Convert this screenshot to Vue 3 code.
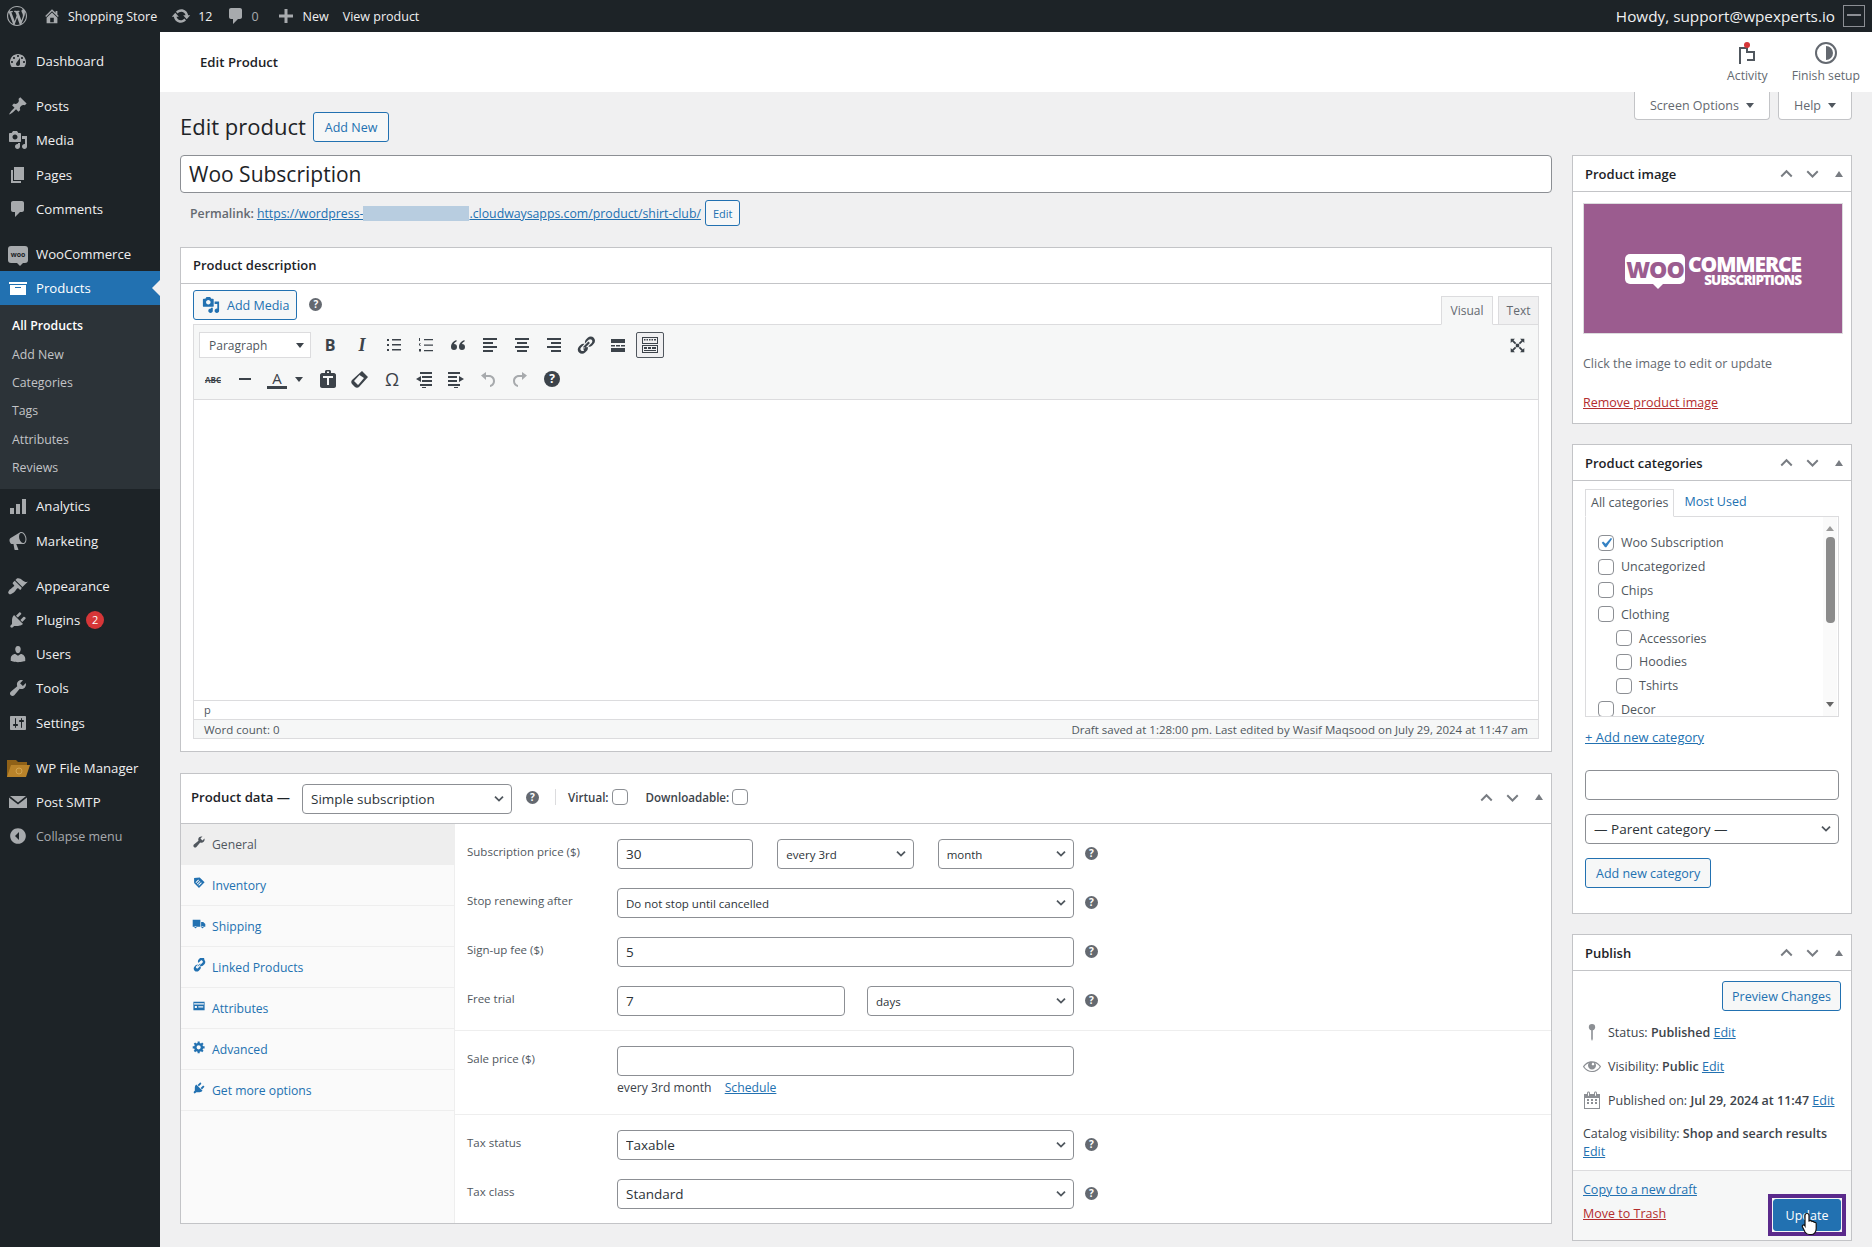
<template>
  <div class="page">
    <header class="adminbar">
      <div class="bar-item wp"><svg class="bar-icon" viewBox="0 0 20 20"><path :d="icons.wordpress" /></svg></div>
      <div class="bar-item home"><svg class="bar-icon small" viewBox="0 0 20 20"><path :d="icons.home" /></svg>Shopping Store</div>
      <div class="bar-item"><svg class="bar-icon" viewBox="0 0 20 20"><path :d="icons.update" /></svg>12</div>
      <div class="bar-item muted"><svg class="bar-icon" viewBox="0 0 20 20"><path :d="icons.comment" /></svg>0</div>
      <div class="bar-item"><svg class="bar-icon" viewBox="0 0 20 20"><path :d="icons.plus" /></svg>New</div>
      <div class="bar-item">View product</div>
      <div class="howdy">Howdy, support@wpexperts.io<span class="avatar"><i></i></span></div>
    </header>

    <div class="layout">
      <aside class="sidebar">
        <template v-for="item in menu" :key="item.label">
          <div class="menu-item" :class="{ current: item.current, sep: item.sep, collapse: item.collapse }">
            <span v-if="item.woo" class="woo-badge">woo</span>
            <svg v-else-if="item.folder" class="menu-icon folder" viewBox="0 0 23 18"><path fill="#8f6118" d="M0 1h9l2 2h9v4H0zM0 6h4v12H0z" /><path fill="#b9832a" d="M4 6h19l-4 12H0z" /><circle cx="12" cy="12" r="3" fill="none" stroke="#d3a552" /></svg>
            <svg v-else class="menu-icon" viewBox="0 0 20 20"><path :d="icons[item.icon]" fill-rule="evenodd" /></svg>
            <span>{{ item.label }}</span>
            <span v-if="item.badge" class="badge">{{ item.badge }}</span>
          </div>
          <ul v-if="item.current" class="submenu">
            <li v-for="(sub, i) in submenu" :key="sub" :class="{ active: i === 0 }">{{ sub }}</li>
          </ul>
        </template>
      </aside>

      <div class="main">
        <div class="topbar">
          <h2 class="topbar-title">Edit Product</h2>
          <div class="topbar-action activity">
            <svg viewBox="0 0 24 24" width="24" height="24" fill="none" stroke="#50575e" stroke-width="2"><path d="M5 23V7h7v4h7v8h-7" /><circle cx="12" cy="4" r="3" fill="#d63638" stroke="none" /></svg>
            <span>Activity</span>
          </div>
          <div class="topbar-action">
            <svg viewBox="0 0 24 24" width="24" height="24"><circle cx="12" cy="12" r="10" fill="none" stroke="#646970" stroke-width="2" /><path d="M12 5a7 7 0 0 1 0 14z" fill="#646970" /></svg>
            <span>Finish setup</span>
          </div>
        </div>

        <div class="content">
          <div class="meta-tabs">
            <div class="meta-tab">Screen Options <b class="arrow"></b></div>
            <div class="meta-tab">Help <b class="arrow"></b></div>
          </div>

          <div class="page-heading">
            <h1>Edit product</h1>
            <button class="btn">Add New</button>
          </div>

          <div class="columns">
            <div class="col-left">
              <input class="title-input" value="Woo Subscription" />
              <div class="permalink">
                <strong>Permalink:</strong>
                <a href="#" class="link">https://wordpress-<span class="blur"></span>.cloudwaysapps.com/product/shirt-club/</a>
                <button class="btn tiny">Edit</button>
              </div>

              <section class="box desc-box">
                <h2 class="box-title">Product description</h2>
                <div class="editor-wrap">
                  <div class="editor-tools">
                    <button class="btn media-btn"><svg viewBox="0 0 20 20" width="18" height="18"><path :d="icons.media" fill="#2271b1" /></svg>Add Media</button>
                    <span class="help"></span>
                    <div class="editor-tabs">
                      <div class="editor-tab on">Visual</div>
                      <div class="editor-tab">Text</div>
                    </div>
                  </div>
                  <div class="editor">
                    <div class="toolbar">
                      <div class="tool-row">
                        <div class="format-select">Paragraph<b class="arrow dark"></b></div>
                        <div class="tool bold">B</div>
                        <div class="tool italic">I</div>
                        <div class="tool" v-for="t in toolsOne" :key="t" :class="{ pressed: t === 'kitchen' }">
                          <svg viewBox="0 0 20 20" width="20" height="20"><path :d="tools[t]" fill="#3c434a" fill-rule="evenodd" /></svg>
                        </div>
                        <div class="tool full">
                          <svg viewBox="0 0 20 20" width="17" height="17"><path :d="tools.full" fill="#3c434a" /></svg>
                        </div>
                      </div>
                      <div class="tool-row">
                        <div class="tool abc">ABC</div>
                        <div class="tool"><svg viewBox="0 0 20 20" width="20" height="20"><path d="M4 9h12v2H4z" fill="#3c434a" /></svg></div>
                        <div class="tool color">A</div>
                        <b class="arrow dark color-arrow"></b>
                        <div class="tool"><svg viewBox="0 0 20 20" width="20" height="20"><path :d="tools.paste" fill="#3c434a" fill-rule="evenodd" /></svg></div>
                        <div class="tool"><svg viewBox="0 0 20 20" width="20" height="20"><path :d="tools.eraser" fill="#3c434a" fill-rule="evenodd" /></svg></div>
                        <div class="tool omega">Ω</div>
                        <div class="tool"><svg viewBox="0 0 20 20" width="20" height="20"><path :d="tools.outdent" fill="#3c434a" /></svg></div>
                        <div class="tool"><svg viewBox="0 0 20 20" width="20" height="20"><path :d="tools.indent" fill="#3c434a" /></svg></div>
                        <div class="tool"><svg viewBox="0 0 20 20" width="20" height="20"><path :d="tools.undo" fill="#a7aaad" /></svg></div>
                        <div class="tool"><svg viewBox="0 0 20 20" width="20" height="20"><path :d="tools.redo" fill="#a7aaad" /></svg></div>
                        <div class="tool"><span class="help big"></span></div>
                      </div>
                    </div>
                    <div class="editor-body"></div>
                    <div class="editor-path">p</div>
                    <div class="editor-status">
                      <span>Word count: 0</span>
                      <span>Draft saved at 1:28:00 pm. Last edited by Wasif Maqsood on July 29, 2024 at 11:47 am</span>
                    </div>
                  </div>
                </div>
              </section>

              <section class="box data-box">
                <div class="data-head">
                  <strong class="data-title">Product data —</strong>
                  <select class="field data-select"><option>Simple subscription</option></select>
                  <span class="help"></span>
                  <span class="data-divider"></span>
                  <label class="data-check">Virtual: <input type="checkbox" /></label>
                  <label class="data-check">Downloadable: <input type="checkbox" /></label>
                  <div class="handles">
                    <svg class="chev" viewBox="0 0 20 20"><path d="M3 14l7-7 7 7" /></svg>
                    <svg class="chev" viewBox="0 0 20 20"><path d="M3 7l7 7 7-7" /></svg>
                    <b class="tri"></b>
                  </div>
                </div>
                <div class="data-body">
                  <ul class="data-tabs">
                    <li v-for="(tab, i) in dataTabs" :key="tab.label" :class="{ on: i === 0 }">
                      <svg viewBox="0 0 20 20" width="14" height="14"><path :d="icons[tab.icon]" fill-rule="evenodd" /></svg>
                      {{ tab.label }}
                    </li>
                  </ul>
                  <div class="data-panel">
                    <div class="panel-section">
                      <div class="form-row">
                        <label>Subscription price ($)</label>
                        <div class="fields">
                          <input class="field" value="30" />
                          <select class="field small-text"><option>every 3rd</option></select>
                          <select class="field small-text"><option>month</option></select>
                        </div>
                        <span class="help"></span>
                      </div>
                      <div class="form-row">
                        <label>Stop renewing after</label>
                        <div class="fields">
                          <select class="field small-text"><option>Do not stop until cancelled</option></select>
                        </div>
                        <span class="help"></span>
                      </div>
                      <div class="form-row">
                        <label>Sign-up fee ($)</label>
                        <div class="fields"><input class="field" value="5" /></div>
                        <span class="help"></span>
                      </div>
                      <div class="form-row tight">
                        <label>Free trial</label>
                        <div class="fields trial">
                          <input class="field" value="7" />
                          <select class="field small-text"><option>days</option></select>
                        </div>
                        <span class="help"></span>
                      </div>
                    </div>
                    <div class="panel-section">
                      <div class="form-row tight">
                        <label>Sale price ($)</label>
                        <div class="fields"><input class="field" /></div>
                      </div>
                      <div class="sale-note">every 3rd month <a href="#" class="link">Schedule</a></div>
                    </div>
                    <div class="panel-section last">
                      <div class="form-row">
                        <label>Tax status</label>
                        <div class="fields"><select class="field"><option>Taxable</option></select></div>
                        <span class="help"></span>
                      </div>
                      <div class="form-row tight">
                        <label>Tax class</label>
                        <div class="fields"><select class="field"><option>Standard</option></select></div>
                        <span class="help"></span>
                      </div>
                    </div>
                  </div>
                </div>
              </section>
            </div>

            <div class="col-right">
              <section class="box side-box">
                <div class="side-head">
                  <h2>Product image</h2>
                  <div class="handles">
                    <svg class="chev" viewBox="0 0 20 20"><path d="M3 14l7-7 7 7" /></svg>
                    <svg class="chev" viewBox="0 0 20 20"><path d="M3 7l7 7 7-7" /></svg>
                    <b class="tri"></b>
                  </div>
                </div>
                <div class="image-body">
                  <div class="product-img">
                    <div class="woo-logo">
                      <span class="woo-bubble">WOO</span>
                      <div class="woo-words">
                        <span class="commerce">COMMERCE</span>
                        <span class="subs">SUBSCRIPTIONS</span>
                      </div>
                    </div>
                  </div>
                  <p class="img-hint">Click the image to edit or update</p>
                  <a href="#" class="link danger">Remove product image</a>
                </div>
              </section>

              <section class="box side-box">
                <div class="side-head">
                  <h2>Product categories</h2>
                  <div class="handles">
                    <svg class="chev" viewBox="0 0 20 20"><path d="M3 14l7-7 7 7" /></svg>
                    <svg class="chev" viewBox="0 0 20 20"><path d="M3 7l7 7 7-7" /></svg>
                    <b class="tri"></b>
                  </div>
                </div>
                <div class="cat-body">
                  <div class="cat-tabs">
                    <div class="cat-tab on">All categories</div>
                    <div class="cat-tab">Most Used</div>
                  </div>
                  <div class="cat-list">
                    <ul>
                      <li v-for="cat in categories" :key="cat.name" :class="{ child: cat.child }">
                        <input type="checkbox" :checked="cat.checked" />{{ cat.name }}
                      </li>
                    </ul>
                    <div class="scrollbar">
                      <b class="sb-up"></b>
                      <i class="sb-thumb"></i>
                      <b class="sb-down"></b>
                    </div>
                  </div>
                  <a href="#" class="link add-cat">+ Add new category</a>
                  <input class="field wide" />
                  <select class="field wide"><option>— Parent category —</option></select>
                  <button class="btn">Add new category</button>
                </div>
              </section>

              <section class="box side-box publish">
                <div class="side-head">
                  <h2>Publish</h2>
                  <div class="handles">
                    <svg class="chev" viewBox="0 0 20 20"><path d="M3 14l7-7 7 7" /></svg>
                    <svg class="chev" viewBox="0 0 20 20"><path d="M3 7l7 7 7-7" /></svg>
                    <b class="tri"></b>
                  </div>
                </div>
                <div class="pub-body">
                  <div class="pub-preview"><button class="btn">Preview Changes</button></div>
                  <div class="pub-row">
                    <svg viewBox="0 0 20 20" width="20" height="20"><path :d="icons.pinv" /></svg>
                    <span>Status: <b>Published</b> <a href="#" class="link">Edit</a></span>
                  </div>
                  <div class="pub-row">
                    <svg viewBox="0 0 20 20" width="20" height="20"><path :d="icons.eye" fill-rule="evenodd" /></svg>
                    <span>Visibility: <b>Public</b> <a href="#" class="link">Edit</a></span>
                  </div>
                  <div class="pub-row">
                    <svg viewBox="0 0 20 20" width="20" height="20"><path :d="icons.calendar" fill-rule="evenodd" /></svg>
                    <span>Published on: <b>Jul 29, 2024 at 11:47</b> <a href="#" class="link">Edit</a></span>
                  </div>
                  <div class="pub-catalog">Catalog visibility: <b>Shop and search results</b><br /><a href="#" class="link">Edit</a></div>
                </div>
                <div class="pub-foot">
                  <div class="pub-links">
                    <a href="#" class="link">Copy to a new draft</a>
                    <a href="#" class="link danger">Move to Trash</a>
                  </div>
                  <div class="update-wrap">
                    <button class="btn primary">Update</button>
                    <svg class="cursor" viewBox="0 0 18 24" width="18" height="24"><path d="M6 1.500c1 0 2 .8 2 2V9l1-.3c1-.2 1.700.2 2 .8 1-.3 1.800 0 2.200.8 1-.2 2 .3 2 1.500v5c0 3-2 5.700-5 5.700H8c-2 0-3-1-4-2.500L1.500 15c-.8-1.200.8-2.800 2.200-1.500L4 14V3.500c0-1.200 1-2 2-2z" fill="#fff" stroke="#111" stroke-width="1.200" /></svg>
                  </div>
                </div>
              </section>
            </div>
          </div>
        </div>
      </div>
    </div>
  </div>
</template>

<script setup>
const icons = {
  wordpress: 'M20 10c0-5.51-4.49-10-10-10C4.48 0 0 4.49 0 10c0 5.52 4.48 10 10 10 5.510 0 10-4.480 10-10zM7.780 15.370L4.370 6.220c.55-.02 1.170-.08 1.170-.08.5-.06.44-1.130-.06-1.110 0 0-1.450.11-2.370.11-.18 0-.37 0-.58-.01C4.120 2.690 6.870 1.110 10 1.110c2.330 0 4.450.87 6.050 2.340-.68-.11-1.650.39-1.650 1.580 0 .74.45 1.360.9 2.100.35.61.55 1.360.55 2.460 0 1.490-1.400 5-1.400 5l-3.030-8.370c.54-.02.82-.17.82-.17.5-.05.44-1.250-.06-1.220 0 0-1.440.12-2.380.12-.87 0-2.330-.12-2.330-.12-.5-.03-.56 1.200-.06 1.220l.92.08 1.260 3.410zM17.410 10c.24-.64.74-1.870.43-4.250.7 1.290 1.050 2.710 1.050 4.250 0 3.290-1.730 6.240-4.400 7.780.97-2.590 1.940-5.200 2.920-7.780zM6.100 18.090C3.120 16.650 1.110 13.530 1.110 10c0-1.300.23-2.480.72-3.590C3.250 10.300 4.670 14.200 6.100 18.090zm4.030-6.630l2.580 6.980c-.86.29-1.760.45-2.710.45-.79 0-1.570-.11-2.290-.33.81-2.380 1.620-4.740 2.420-7.100z',
  home: 'M16 8.500l1.530 1.530-1.060 1.060L10 4.620l-6.470 6.470-1.060-1.060L10 2.500l4 4v-2h2v4zm-6-2.460l6 5.990V18H4v-5.970zM12 17v-5H8v5h4z',
  update: 'M10.200 3.280c3.530 0 6.430 2.610 6.920 6h2.080l-3.500 4-3.500-4h2.320c-.45-1.970-2.210-3.440-4.320-3.440-1.450 0-2.730.71-3.540 1.780L4.950 5.660C6.230 4.200 8.110 3.280 10.200 3.280zm-.4 13.440c-3.520 0-6.430-2.610-6.920-6H.8l3.500-4c1.170 1.330 2.330 2.670 3.500 4H5.480c.45 1.970 2.210 3.440 4.320 3.440 1.450 0 2.730-.71 3.540-1.780l1.710 1.950c-1.280 1.460-3.150 2.390-5.250 2.390z',
  comment: 'M5 2h9c1.100 0 2 .9 2 2v7c0 1.100-.9 2-2 2h-2l-5 5v-5H5c-1.100 0-2-.9-2-2V4c0-1.100.9-2 2-2z',
  plus: 'M8.500 3h3v5.500H17v3h-5.500V17h-3v-5.500H3v-3h5.500z',
  dashboard: 'M3.760 16h12.480c1.100-1.370 1.760-3.110 1.760-5 0-4.420-3.580-8-8-8s-8 3.580-8 8c0 1.890.66 3.630 1.760 5zM10 4c.55 0 1 .45 1 1s-.45 1-1 1-1-.45-1-1 .45-1 1-1zM6 6c.55 0 1 .45 1 1s-.45 1-1 1-1-.45-1-1 .45-1 1-1zm8 0c.55 0 1 .45 1 1s-.45 1-1 1-1-.45-1-1 .45-1 1-1zm-5.370 5.550L12 7v6c0 1.100-.9 2-2 2s-2-.9-2-2c0-.57.24-1.080.63-1.450zM4 10c.55 0 1 .45 1 1s-.45 1-1 1-1-.45-1-1 .45-1 1-1zm12 0c.55 0 1 .45 1 1s-.45 1-1 1-1-.45-1-1 .45-1 1-1z',
  pin: 'M10.440 3.020l1.820-1.820 6.360 6.350-1.830 1.820c-1.050-.68-2.480-.57-3.410.36l-.75.75c-.92.93-1.040 2.350-.35 3.410l-1.830 1.820-2.410-2.410-2.800 2.790c-.42.42-3.380 2.710-3.800 2.290s1.860-3.390 2.280-3.810l2.790-2.790L4.100 9.360l1.830-1.820c1.050.69 2.480.57 3.400-.36l.75-.75c.93-.92 1.050-2.350.36-3.410z',
  media: 'M13 11V4c0-.55-.45-1-1-1h-1.670L9 1H5L3.670 3H2c-.55 0-1 .45-1 1v7c0 .55.45 1 1 1h10c.55 0 1-.45 1-1zM7 4.500c1.380 0 2.500 1.120 2.500 2.500S8.380 9.500 7 9.500 4.500 8.380 4.500 7 5.620 4.500 7 4.500zM14 6h5v10.500c0 1.380-1.120 2.500-2.500 2.500S14 17.880 14 16.500s1.120-2.500 2.500-2.500c.17 0 .34.02.5.05V9h-3V6zm-4 8.050V13h2v3.500c0 1.380-1.120 2.500-2.500 2.500S7 17.880 7 16.500 8.120 14 9.500 14c.17 0 .34.02.5.05z',
  page: 'M6 15V2h10v13H6zm-1 1h8v2H3V5h2v11z',
  archive: 'M19 4v2H1V4h18zM2 7h16v10H2V7zm11 3V9H7v1h6z',
  analytics: 'M2 12h4v6H2zM8 8h4v10H8zM14 3h4v15h-4z',
  megaphone: 'M18.150 5.940c.46 1.620.38 3.220-.02 4.480-.42 1.280-1.260 2.180-2.300 2.480-.16.06-.26.06-.4.06-.06.02-.12.02-.18.02-.06.02-.14.02-.22.02H8.230l2.220 5.500c.02.14-.06.26-.14.34-.08.1-.24.16-.34.16H6.950c-.1 0-.26-.06-.34-.16-.08-.08-.16-.2-.14-.34l-1-5.500H4.250c-.5.06-1.080-.18-1.540-.62s-.88-1.080-1.060-1.880c-.24-.8-.2-1.560-.02-2.200.18-.62.58-1.080 1.060-1.300l9.020-5.420c.1-.06.18-.1.24-.16.06-.04.14-.08.24-.12.16-.08.28-.12.5-.18 1.040-.3 2.240.1 3.220.98s1.760 2.180 2.260 3.860zm-2.580 5.980c.4-.1.74-.34 1.040-.7.58-.7.86-1.760.86-3.040-.02-.64-.1-1.300-.28-1.980-.34-1.360-1.020-2.500-1.780-3.240s-1.680-1.100-2.460-.88c-.82.22-1.400.96-1.700 2-.32 1.040-.28 2.360.06 3.720.38 1.360 1 2.500 1.800 3.240.78.74 1.620 1.100 2.460.88z',
  brush: 'M14.480 11.060L7.410 3.990l1.500-1.500c.5-.56 2.300-.47 3.510.32 1.210.8 1.430 1.280 2.910 2.100 1.180.64 2.450 1.260 4.450.85zm-.71.71L6.700 4.700 4.930 6.470c-.39.39-.39 1.020 0 1.410l1.060 1.060c.39.39.39 1.030 0 1.420-.6.6-1.430 1.110-2.210 1.690-.35.26-.7.53-1.010.84C1.430 13.230.18 15.780.17 16.500c-.01.72 1.080 1.820 1.800 1.820.72 0 3.290-1.240 4.600-2.600.3-.3.58-.66.84-1.010.58-.78 1.090-1.610 1.690-2.210.39-.39 1.030-.39 1.420 0l1.060 1.060c.39.39 1.020.39 1.410 0z',
  plugin: 'M13.110 4.360L9.870 7.600 8 5.730l3.240-3.240c.35-.34 1.050-.2 1.560.32.52.51.66 1.210.31 1.550zm-8 1.770l.91-1.120 9.010 9.010-1.190.84c-.71.71-2.630 1.160-3.820 1.160H6.140L4.900 17.260c-.59.59-1.540.59-2.120 0-.59-.58-.59-1.530 0-2.120l1.240-1.240v-3.880c0-1.130.4-3.190 1.090-3.890zm7.260 3.970l3.240-3.240c.34-.35 1.040-.21 1.550.31.52.51.66 1.210.31 1.550l-3.240 3.250z',
  users: 'M10 9.250c-2.270 0-2.730-3.440-2.730-3.440C7 4.020 7.820 2 9.970 2c2.160 0 2.980 2.020 2.710 3.810 0 0-.41 3.440-2.680 3.440zm0 2.570L12.720 10c2.390 0 4.520 2.330 4.520 4.530v2.490s-3.650 1.130-7.240 1.130c-3.650 0-7.240-1.130-7.240-1.130v-2.490c0-2.250 1.940-4.480 4.470-4.480z',
  wrench: 'M16.680 9.770c-1.340 1.340-3.300 1.670-4.950.99l-5.410 6.520c-.99.99-2.590.99-3.580 0s-.99-2.590 0-3.570l6.520-5.420c-.68-1.650-.35-3.610.99-4.950 1.280-1.280 3.120-1.620 4.720-1.060l-2.890 2.890 2.820 2.820 2.860-2.870c.53 1.580.18 3.390-1.080 4.650z',
  settings: 'M18 16V4c0-.55-.45-1-1-1H3c-.55 0-1 .45-1 1v12c0 .55.45 1 1 1h14c.55 0 1-.45 1-1zM8 11h1c.55 0 1 .45 1 1s-.45 1-1 1H8v1.500c0 .28-.22.5-.5.5s-.5-.22-.5-.5V13H6c-.55 0-1-.45-1-1s.45-1 1-1h1V5.500c0-.28.22-.5.5-.5s.5.22.5.5V11zm5-2h-1c-.55 0-1-.45-1-1s.45-1 1-1h1V5.500c0-.28.22-.5.5-.5s.5.22.5.5V7h1c.55 0 1 .45 1 1s-.45 1-1 1h-1v5.500c0 .28-.22.5-.5.5s-.5-.22-.5-.5V9z',
  mail: 'M2 4h16l-8 6.500zM1 5.500l9 7 9-7V16H1z',
  collapse: 'M10 2.160c4.330 0 7.840 3.510 7.840 7.840s-3.510 7.840-7.840 7.840S2.160 14.330 2.160 10 5.670 2.160 10 2.160zM11 14V6l-4 4z',
  tag: 'M11 2l7 7-8 8-7-7V3zM9 5L5 9l1 1 4-4zm2 2l-4 4 1 1 4-4zm2 2l-4 4 1 1 4-4z',
  truck: 'M1 4h11v10H1zM13 7h3l3 3v4h-6zM5 16a1.500 1.500 0 1 0 0-3 1.500 1.500 0 0 0 0 3zm10 0a1.500 1.500 0 1 0 0-3 1.500 1.500 0 0 0 0 3z',
  link: 'M17.740 2.760c1.680 1.690 1.680 4.410 0 6.100l-1.530 1.520c-1.120 1.120-2.700 1.490-4.130 1.130l-1.010-1.010 2.040-2.030 2.100-2.100c.5-.5.5-1.320 0-1.820l-.82-.82c-.5-.5-1.320-.5-1.820 0l-3.100 3.100-.9-.9c-.36-1.430.01-3 1.130-4.120l1.520-1.530c1.690-1.680 4.410-1.680 6.100 0zM8.420 12.140l3.720-3.720-.56-.56-3.720 3.720zm-.5-4.220l1.010 1.010L5.800 12c-.5.5-.5 1.320 0 1.820l.82.82c.5.5 1.320.5 1.820 0l3.100-3.100.9.9c.36 1.430-.01 3-1.130 4.120l-1.520 1.530c-1.690 1.680-4.410 1.680-6.100 0-1.680-1.690-1.680-4.410 0-6.100l1.530-1.520c1.120-1.120 2.700-1.490 4.130-1.130z',
  list: 'M18 16V4H2v12zM3 6h14v2H3zm1 4h3v3H4zm5 0h7v1H9zm0 2h7v1H9z',
  gear: 'M18 12h-2.180c-.17.7-.44 1.350-.81 1.930l1.540 1.540-2.100 2.100-1.540-1.540c-.58.36-1.230.64-1.910.81V19H8v-2.180c-.68-.17-1.330-.44-1.910-.81l-1.540 1.540-2.120-2.120 1.540-1.540c-.36-.58-.64-1.230-.81-1.910H1V9h2.180c.17-.7.44-1.350.81-1.930L2.450 5.530l2.100-2.100 1.540 1.540c.58-.37 1.230-.64 1.910-.81V2h3v2.160c.68.17 1.330.44 1.910.81l1.540-1.540 2.120 2.120-1.540 1.540c.36.58.64 1.230.81 1.910H18zm-8.500 1.500a3 3 0 1 0 0-6 3 3 0 0 0 0 6z',
  pinv: 'M10 2a3.200 3.200 0 0 1 3.200 3.200c0 1.500-1.100 2.800-2.400 3.100V17l-.8 2-.8-2V8.300C7.900 8 6.800 6.700 6.800 5.200A3.200 3.200 0 0 1 10 2z',
  eye: 'M18.300 9.500C15 4.900 8.500 3.800 3.900 7.200c-1.200.9-2.200 2.100-3 3.400.2.400.5.800.8 1.200 3.300 4.600 9.600 5.600 14.200 2.400.9-.7 1.700-1.500 2.400-2.400.3-.4.5-.8.8-1.200-.3-.4-.5-.7-.8-1.100zm-8.200-2.300c.5-.5 1.300-.5 1.800 0s.5 1.300 0 1.800-1.300.5-1.800 0-.5-1.300 0-1.800zm-.1 7.700c-3.100 0-6-1.600-7.700-4.200C3.500 9 5.100 7.800 7 7c-.7.700-1 1.500-1 2.400 0 2.200 1.700 4 4 4s4-1.800 4-4c0-.9-.3-1.700-1-2.400 1.900.8 3.500 2 4.700 3.700-1.700 2.600-4.600 4.200-7.700 4.200z',
  calendar: 'M15 4h3v15H2V4h3V3c0-.41.15-.76.44-1.060.29-.29.65-.44 1.060-.44s.77.15 1.060.44c.29.3.44.65.44 1.060v1h4V3c0-.41.15-.76.44-1.060.29-.29.65-.44 1.060-.44s.77.15 1.060.44c.29.3.44.65.44 1.060v1zM6 3v2.500c0 .14.05.26.15.36.09.09.21.14.35.14s.26-.05.35-.14c.1-.1.15-.22.15-.36V3c0-.14-.05-.26-.15-.35-.09-.1-.21-.15-.35-.15s-.26.05-.35.15c-.1.09-.15.21-.15.35zm7 0v2.500c0 .14.05.26.14.36.1.09.22.14.36.14s.26-.05.36-.14c.09-.1.14-.22.14-.36V3c0-.14-.05-.26-.14-.35-.1-.1-.22-.15-.36-.15s-.26.05-.36.15c-.09.09-.14.21-.14.35zm4 15V8H3v10h14zM7 9v2H5V9h2zm2 0h2v2H9V9zm4 2V9h2v2h-2zm-6 1v2H5v-2h2zm2 0h2v2H9v-2zm4 2v-2h2v2h-2z'
}

const tools = {
  ul: 'M3 4h2v2H3zM8 4h9v1.500H8zM3 9h2v2H3zM8 9h9v1.500H8zM3 14h2v2H3zM8 14h9v1.500H8z',
  ol: 'M3 3h1v3H3zM3 8.500h2V9H4v1h1v.5H3zM3 14h2v2.500H3zM8 4h9v1.200H8zM8 9.500h9v1.200H8zM8 15h9v1.200H8z',
  quote: 'M8.500 5C5.500 6 3 8.500 3 12a3 3 0 1 0 3-3c.3-1 1.300-2 2.500-2.500zm8 0c-3 1-5.500 3.500-5.500 7a3 3 0 1 0 3-3c.3-1 1.300-2 2.500-2.500z',
  left: 'M3 3h14v2H3zM3 7h10v2H3zM3 11h14v2H3zM3 15h10v2H3z',
  center: 'M3 3h14v2H3zM5 7h10v2H5zM3 11h14v2H3zM5 15h10v2H5z',
  right: 'M3 3h14v2H3zM7 7h10v2H7zM3 11h14v2H3zM7 15h10v2H7z',
  link: 'M17.740 2.760c1.680 1.690 1.680 4.410 0 6.100l-1.530 1.520c-1.120 1.120-2.700 1.490-4.130 1.130l2.100-2.100 1.530-1.520c.84-.84.84-2.200 0-3.050-.84-.84-2.200-.84-3.050 0l-1.520 1.530-2.100 2.100c-.37-1.430 0-3 1.120-4.130l1.530-1.520c1.690-1.680 4.400-1.680 6.050-.06zM8.590 13.430l5.340-5.340-1.530-1.520-5.340 5.340zm-.5-1.010c-.84.84-.84 2.200 0 3.050-.84.84-2.200.84-3.050 0-.84-.84-.84-2.200 0-3.050l1.530-1.530 2.100-2.090c-1.430-.37-3 0-4.130 1.120l-1.520 1.530c-1.690 1.680-1.690 4.400 0 6.100 1.680 1.680 4.400 1.680 6.090 0l1.530-1.530c1.120-1.120 1.490-2.700 1.120-4.120z',
  more: 'M3 4h14v4H3zM3 10h4v1.500H3zM8 10h4v1.500H8zM13 10h4v1.500h-4zM3 13h14v4H3z',
  kitchen: 'M2 2h16v7H2zm1 1v5h14V3zm1 1h1.500v1.500H4zm2.500 0H8v1.500H6.500zM9 4h1.500v1.500H9zm2.500 0H13v1.500h-1.500zM14 4h2v1.500h-2zM2 10h16v8H2zm1 1v6h14v-6zm1 1h3v2H4zm4 0h3v2H8zm4 0h4v2h-4zM4 15h12v1H4z',
  full: 'M2 2h5L5.300 3.700 8.500 7 7 8.500 3.700 5.300 2 7zM18 2v5l-1.700-1.700L13 8.500 11.500 7l3.200-3.300L13 2zM2 18v-5l1.700 1.700L7 11.500 8.500 13l-3.200 3.300L7 18zM18 18h-5l1.700-1.700-3.200-3.300 1.500-1.500 3.300 3.200L18 13zM8 8h4v4H8z',
  paste: 'M7 2.500C7 1.700 7.700 1 8.500 1h3c.8 0 1.500.7 1.500 1.500V4h3c1 0 2 1 2 2v11c0 1-1 2-2 2H4c-1 0-2-1-2-2V6c0-1 1-2 2-2h3zM9 2.500V4h2V2.500zM5 7v2h4v7h2V9h4V7z',
  eraser: 'M12 2l6 6-9 10c-1 1-3 1-4 0l-3-3c-1-1-1-3 0-4zm-2.500 4L4 12l4 4 1-1 5-6z',
  outdent: 'M6 3h12v2H6zM8 7h10v2H8zM8 11h10v2H8zM6 15h12v2H6zM7 7v6l-5-3zM8 18h4v1H8z',
  indent: 'M2 3h12v2H2zM2 7h9v2H2zM2 11h9v2H2zM2 15h12v2H2zM13 7l5 3-5 3zM8 18h4v1H8z',
  undo: 'M8 3v3h3c3.500 0 6 2.500 6 6 0 3-2 5.500-5 6v-2c1.800-.5 3-2 3-4 0-2.300-1.700-4-4-4H8v3L3 6.500z',
  redo: 'M12 3v3H9c-3.500 0-6 2.500-6 6 0 3 2 5.500 5 6v-2c-1.800-.5-3-2-3-4 0-2.300 1.700-4 4-4h3v3l5-4.500z'
}

const toolsOne = ['ul', 'ol', 'quote', 'left', 'center', 'right', 'link', 'more', 'kitchen']

const menu = [
  { label: 'Dashboard', icon: 'dashboard' },
  { label: 'Posts', icon: 'pin', sep: true },
  { label: 'Media', icon: 'media' },
  { label: 'Pages', icon: 'page' },
  { label: 'Comments', icon: 'comment' },
  { label: 'WooCommerce', woo: true, sep: true },
  { label: 'Products', icon: 'archive', current: true },
  { label: 'Analytics', icon: 'analytics' },
  { label: 'Marketing', icon: 'megaphone' },
  { label: 'Appearance', icon: 'brush', sep: true },
  { label: 'Plugins', icon: 'plugin', badge: 2 },
  { label: 'Users', icon: 'users' },
  { label: 'Tools', icon: 'wrench' },
  { label: 'Settings', icon: 'settings' },
  { label: 'WP File Manager', folder: true, sep: true },
  { label: 'Post SMTP', icon: 'mail' },
  { label: 'Collapse menu', icon: 'collapse', collapse: true }
]

const submenu = ['All Products', 'Add New', 'Categories', 'Tags', 'Attributes', 'Reviews']

const dataTabs = [
  { label: 'General', icon: 'wrench' },
  { label: 'Inventory', icon: 'tag' },
  { label: 'Shipping', icon: 'truck' },
  { label: 'Linked Products', icon: 'link' },
  { label: 'Attributes', icon: 'list' },
  { label: 'Advanced', icon: 'gear' },
  { label: 'Get more options', icon: 'plugin' }
]

const categories = [
  { name: 'Woo Subscription', checked: true },
  { name: 'Uncategorized' },
  { name: 'Chips' },
  { name: 'Clothing' },
  { name: 'Accessories', child: true },
  { name: 'Hoodies', child: true },
  { name: 'Tshirts', child: true },
  { name: 'Decor' }
]
</script>

<style>
html, body {
  margin: 0;
  background: #f0f0f1;
}
</style>

<style scoped>
.page {
  width: 1872px;
  height: 1247px;
  overflow: hidden;
  background: #f0f0f1;
  font-family: "Open Sans", "Noto Sans", sans-serif;
  font-size: 12.5px;
  color: #3c434a;
}
h1, h2, p, ul {
  margin: 0;
  padding: 0;
}
ul {
  list-style: none;
}
.link {
  color: #2271b1;
  text-decoration: underline;
}
.link.danger {
  color: #b32d2e;
}

/* admin bar */
.adminbar {
  height: 32px;
  background: #1d2327;
  color: #f0f0f1;
  display: flex;
  align-items: center;
}
.bar-item {
  display: flex;
  align-items: center;
  padding: 0 7px;
  gap: 7px;
}
.bar-item.muted {
  color: #a7aaad;
  gap: 5px;
  margin-right: 3px;
}
.bar-item.wp {
  width: 20px;
}
.bar-item.home {
  padding-left: 9px;
}
.bar-icon {
  width: 20px;
  height: 20px;
  fill: #a7aaad;
  flex: none;
}
.bar-icon.small {
  width: 18px;
  height: 18px;
}
.howdy {
  margin-left: auto;
  display: flex;
  align-items: center;
  gap: 8px;
  padding-right: 7px;
  font-size: 15.300px;
}
.avatar {
  width: 22px;
  height: 22px;
  box-sizing: border-box;
  border: 1px solid #8c8f94;
  background: #1d2327;
  display: flex;
  align-items: center;
  justify-content: center;
}
.avatar i {
  display: block;
  width: 14px;
  height: 2px;
  margin-top: -3px;
  background: #8c8f94;
}

.layout {
  display: flex;
  height: 1215px;
}

/* sidebar */
.sidebar {
  width: 160px;
  flex: none;
  background: #1d2327;
  color: #f0f0f1;
  padding-top: 12px;
  box-sizing: border-box;
  font-size: 13.200px;
}
.menu-item {
  height: 34.200px;
  display: flex;
  align-items: center;
  position: relative;
}
.menu-item.sep {
  margin-top: 11px;
}
.menu-icon {
  width: 20px;
  height: 20px;
  margin: 0 8px;
  fill: #a7aaad;
  flex: none;
}
.menu-icon.folder {
  width: 23px;
  height: 18px;
  margin: 0 6px 0 7px;
}
.menu-item.current {
  background: #2271b1;
  color: #fff;
}
.menu-item.current .menu-icon {
  fill: #fff;
}
.menu-item.current::after {
  content: "";
  position: absolute;
  right: 0;
  top: 9px;
  border: 8px solid transparent;
  border-right-color: #f0f0f1;
  border-left: 0;
}
.menu-item.collapse {
  color: #a7aaad;
  font-size: 12.500px;
}
.woo-badge {
  width: 20px;
  height: 17px;
  margin: 0 8px;
  border-radius: 3px;
  background: #a7aaad;
  color: #1d2327;
  font-size: 7px;
  font-weight: 700;
  line-height: 17px;
  text-align: center;
  flex: none;
  position: relative;
}
.woo-badge::after {
  content: "";
  position: absolute;
  left: 9px;
  bottom: -3px;
  border: 3px solid transparent;
  border-top-color: #a7aaad;
  border-bottom: 0;
}
.badge {
  width: 18px;
  height: 18px;
  margin-left: 6px;
  border-radius: 50%;
  background: #d63638;
  color: #fff;
  font-size: 11px;
  line-height: 18px;
  text-align: center;
}
.submenu {
  background: #2c3338;
  padding: 7px 0;
  height: 184px;
  box-sizing: border-box;
}
.submenu li {
  height: 28.300px;
  line-height: 28.300px;
  padding-left: 12px;
  color: #c3c4c7;
  font-size: 12.300px;
}
.submenu li.active {
  color: #fff;
  font-weight: 600;
}

/* top bar */
.main {
  flex: 1;
  min-width: 0;
}
.topbar {
  height: 60px;
  background: #fff;
  display: flex;
  align-items: center;
  padding-left: 40px;
  padding-right: 12px;
  gap: 24px;
}
.topbar-title {
  margin-right: auto;
  font-size: 13.200px;
  font-weight: 600;
  color: #1d2327;
}
.topbar-action {
  display: flex;
  flex-direction: column;
  align-items: center;
  gap: 2px;
  font-size: 12.200px;
  color: #646970;
}

.content {
  padding: 0 20px;
}
.meta-tabs {
  display: flex;
  justify-content: flex-end;
  gap: 8px;
  margin-bottom: -8px;
}
.meta-tab {
  height: 28px;
  box-sizing: border-box;
  border: 1px solid #c3c4c7;
  border-top: 0;
  border-radius: 0 0 4px 4px;
  background: #fff;
  color: #646970;
  display: flex;
  align-items: center;
  gap: 7px;
  padding: 0 15px;
}
.arrow {
  border: 4px solid transparent;
  border-top: 5px solid #50575e;
  border-bottom: 0;
  display: inline-block;
}
.arrow.dark {
  border-top-color: #3c434a;
}

.page-heading {
  display: flex;
  align-items: center;
  height: 30px;
  gap: 7px;
  margin-bottom: 13px;
}
.page-heading h1 {
  font-size: 22px;
  font-weight: 400;
  color: #1d2327;
  margin-top: -2px;
  position: relative;
  z-index: 1;
}
.page-heading .btn {
  padding: 0 11px;
}

.btn {
  font: inherit;
  height: 30px;
  padding: 0 10px;
  border: 1px solid #2271b1;
  border-radius: 3px;
  background: #f6f7f7;
  color: #2271b1;
  box-sizing: border-box;
}
.btn.tiny {
  height: 26px;
  padding: 0 7px;
  font-size: 11px;
}
.btn.primary {
  display: block;
  background: #2271b1;
  color: #fff;
  width: 68px;
  height: 32px;
}

.columns {
  display: flex;
  gap: 20px;
  align-items: flex-start;
}
.col-left {
  width: 1372px;
  flex: none;
}
.col-right {
  width: 280px;
  flex: none;
}

.title-input {
  display: block;
  width: 100%;
  height: 38px;
  box-sizing: border-box;
  border: 1px solid #8c8f94;
  border-radius: 4px;
  padding: 0 8px;
  font: inherit;
  font-size: 21px;
  color: #1d2327;
  background: #fff;
  outline: none;
}
.permalink {
  display: flex;
  align-items: center;
  gap: 3px;
  height: 26px;
  margin-top: 7px;
  padding-left: 10px;
  color: #646970;
  font-size: 12.300px;
}
.permalink strong {
  font-weight: 600;
}
.permalink .btn {
  margin-left: 1px;
}
.blur {
  display: inline-block;
  width: 106px;
  height: 15px;
  background: #b8cde0;
  vertical-align: -3px;
}

.box {
  background: #fff;
  border: 1px solid #c3c4c7;
  box-sizing: border-box;
}
.desc-box {
  height: 505px;
  margin-top: 21px;
}
.box-title {
  height: 35px;
  line-height: 35px;
  padding-left: 12px;
  font-size: 13px;
  font-weight: 600;
  color: #1d2327;
  border-bottom: 1px solid #c3c4c7;
}
.editor-wrap {
  padding: 6px 12px 0;
}
.editor-tools {
  display: flex;
  align-items: flex-start;
  height: 34px;
}
.media-btn {
  display: flex;
  align-items: center;
  gap: 7px;
  padding: 0 7px 0 8px;
}
.help {
  display: inline-block;
  width: 13px;
  height: 13px;
  border-radius: 50%;
  background: #646970;
  position: relative;
  flex: none;
}
.help::after {
  content: "?";
  position: absolute;
  inset: 0;
  color: #fff;
  font-size: 10px;
  font-weight: 700;
  line-height: 13px;
  text-align: center;
}
.help.big {
  width: 16px;
  height: 16px;
  background: #3c434a;
}
.help.big::after {
  font-size: 12px;
  line-height: 16px;
}
.editor-tools > .help {
  margin: 8px 0 0 12px;
}
.editor-tabs {
  margin-left: auto;
  margin-top: 6px;
  display: flex;
  gap: 5px;
  position: relative;
  z-index: 1;
}
.editor-tab {
  width: 41px;
  height: 29px;
  box-sizing: border-box;
  text-align: center;
  line-height: 27px;
  font-size: 12px;
  color: #646970;
  border: 1px solid #dcdcde;
  background: #f0f0f1;
}
.editor-tab.on {
  width: 52px;
  background: #f6f7f7;
  border-bottom-color: #f6f7f7;
}
.editor {
  border: 1px solid #dcdcde;
}
.toolbar {
  padding: 6px 5px;
  background: #f6f7f7;
  border-bottom: 1px solid #dcdcde;
  display: flex;
  flex-direction: column;
  gap: 6px;
}
.tool-row {
  display: flex;
  align-items: center;
  gap: 4px;
  height: 28px;
}
.format-select {
  width: 112px;
  height: 26px;
  box-sizing: border-box;
  border: 1px solid #dcdcde;
  background: #fff;
  display: flex;
  align-items: center;
  justify-content: space-between;
  padding: 0 6px 0 9px;
  margin-right: 1px;
  font-size: 12px;
  color: #50575e;
}
.tool {
  width: 28px;
  height: 28px;
  box-sizing: border-box;
  flex: none;
  display: flex;
  align-items: center;
  justify-content: center;
  color: #3c434a;
}
.tool.pressed {
  height: 26px;
  border: 1px solid #50575e;
  border-radius: 2px;
  background: #f0f0f1;
}
.tool.full {
  margin-left: auto;
  margin-right: 2px;
}
.tool.bold {
  font-size: 16px;
  font-weight: 700;
}
.tool.italic {
  font-family: "Liberation Serif", serif;
  font-size: 18px;
  font-weight: 700;
  font-style: italic;
}
.tool.abc {
  font-size: 8px;
  font-weight: 700;
  text-decoration: line-through;
}
.tool.omega {
  font-size: 18px;
}
.tool.color {
  font-size: 15px;
  line-height: 18px;
  height: 20px;
  width: 20px;
  margin: 0 4px;
  border-bottom: 3px solid #3c434a;
}
.color-arrow {
  margin: 0 7px 0 0;
}
.editor-body {
  height: 300px;
  background: #fff;
}
.editor-path {
  height: 20px;
  box-sizing: border-box;
  border-top: 1px solid #dcdcde;
  border-bottom: 1px solid #dcdcde;
  padding: 1px 10px;
  font-size: 11px;
  color: #50575e;
}
.editor-status {
  height: 18px;
  display: flex;
  justify-content: space-between;
  align-items: center;
  padding: 0 10px;
  font-size: 11.500px;
  background: #f6f7f7;
  color: #50575e;
}

/* product data */
.data-box {
  margin-top: 21px;
  height: 451px;
}
.data-head {
  height: 50px;
  box-sizing: border-box;
  border-bottom: 1px solid #c3c4c7;
  display: flex;
  align-items: center;
  padding-left: 10px;
  padding-bottom: 3px;
}
.data-title {
  font-size: 13.200px;
  font-weight: 600;
  color: #1d2327;
  width: 111px;
}
.field {
  display: block;
  width: 100%;
  height: 30px;
  box-sizing: border-box;
  border: 1px solid #8c8f94;
  border-radius: 4px;
  background: #fff;
  padding: 0 8px;
  font: inherit;
  font-size: 13.500px;
  color: #2c3338;
  outline: none;
}
select.field {
  appearance: none;
  padding-right: 24px;
  background: #fff url("data:image/svg+xml;utf8,<svg xmlns='http://www.w3.org/2000/svg' width='20' height='20'><path d='M5 7l5 5 5-5' fill='none' stroke='%2350575e' stroke-width='2.200'/></svg>") no-repeat right 4px center / 16px 16px;
}
.field.small-text {
  font-size: 11.500px;
}
.data-select {
  width: 210px;
  margin-top: 3px;
  font-weight: 500;
}
.data-head .help {
  margin-left: 14px;
}
.data-divider {
  width: 1px;
  height: 16px;
  background: #dcdcde;
  margin: 0 12px 0 16px;
}
.data-check {
  display: flex;
  align-items: center;
  gap: 3px;
  margin-right: 18px;
  font-size: 11.600px;
  font-weight: 600;
  color: #3c434a;
}
input[type="checkbox"] {
  appearance: none;
  width: 16px;
  height: 16px;
  margin: 0;
  border: 1px solid #8c8f94;
  border-radius: 4px;
  background: #fff;
  flex: none;
}
input[type="checkbox"]:checked {
  background: #fff url("data:image/svg+xml;utf8,<svg xmlns='http://www.w3.org/2000/svg' viewBox='0 0 20 20'><path d='M14.830 4.890l1.340.94-5.810 8.380H9.020L5.780 9.670l1.340-1.250 2.570 2.400z' fill='%233582c4'/></svg>") center / 20px 20px no-repeat;
}
.handles {
  margin-left: auto;
  display: flex;
  align-items: center;
  gap: 11px;
  padding-right: 8px;
}
.chev {
  width: 15px;
  height: 15px;
  fill: none;
  stroke: #787c82;
  stroke-width: 2.600;
}
.tri {
  border: 4.500px solid transparent;
  border-bottom: 6px solid #787c82;
  border-top: 0;
  margin-left: 4px;
}
.data-body {
  display: flex;
  height: 399px;
}
.data-tabs {
  width: 274px;
  flex: none;
  box-sizing: border-box;
  background: #fafafa;
  border-right: 1px solid #eee;
}
.data-tabs li {
  height: 41px;
  box-sizing: border-box;
  border-bottom: 1px solid #eee;
  display: flex;
  align-items: center;
  gap: 6px;
  padding: 0 0 0 11px;
  color: #2271b1;
  font-size: 12.200px;
}
.data-tabs li svg {
  fill: #2271b1;
  margin-top: -4px;
  flex: none;
}
.data-tabs li.on {
  background: #eee;
  color: #50575e;
  margin-right: -1px;
}
.data-tabs li.on svg {
  fill: #50575e;
}
.data-panel {
  flex: 1;
  min-width: 0;
}
.panel-section {
  padding: 15px 0 14px 12px;
  border-bottom: 1px solid #eee;
}
.panel-section.last {
  border-bottom: 0;
}
.form-row {
  display: flex;
  align-items: flex-start;
  height: 30px;
  margin-bottom: 19px;
}
.form-row.tight {
  margin-bottom: 0;
}
.form-row label {
  width: 150px;
  flex: none;
  font-size: 11.500px;
  color: #50575e;
  line-height: 25px;
}
.fields {
  width: 457px;
  flex: none;
  display: grid;
  grid-auto-flow: column;
  grid-auto-columns: minmax(0, 1fr);
  column-gap: 24px;
}
.fields.trial {
  grid-template-columns: 228px minmax(0, 1fr);
  column-gap: 22px;
}
.form-row .help {
  margin: 8px 0 0 11px;
}
.sale-note {
  margin: 3px 0 3px 150px;
  font-size: 12.200px;
  line-height: 18px;
}
.sale-note .link {
  margin-left: 10px;
}

/* side boxes */
.side-box + .side-box {
  margin-top: 20px;
}
.side-head {
  height: 36px;
  box-sizing: border-box;
  border-bottom: 1px solid #c3c4c7;
  display: flex;
  align-items: center;
  padding-left: 12px;
}
.side-head h2 {
  font-size: 13px;
  font-weight: 600;
  color: #1d2327;
}
.image-body {
  padding: 11px 8px 11px 10px;
  height: 231px;
  box-sizing: border-box;
}
.product-img {
  height: 131px;
  background: #9b5c8f;
  display: flex;
  align-items: center;
  justify-content: center;
  color: #fff;
  border: 1px solid #dcdcde;
  box-sizing: border-box;
}
.woo-logo {
  display: flex;
  align-items: center;
  gap: 3px;
  font-family: "Open Sans", sans-serif;
  font-weight: 800;
}
.woo-bubble {
  background: #fff;
  color: #9b5c8f;
  border-radius: 5px;
  width: 60px;
  text-align: center;
  font-size: 23px;
  line-height: 30px;
  letter-spacing: -1px;
  position: relative;
}
.woo-bubble::after {
  content: "";
  position: absolute;
  left: 28px;
  bottom: -5px;
  border: 5px solid transparent;
  border-top-color: #fff;
  border-bottom: 0;
}
.woo-words {
  display: flex;
  flex-direction: column;
  align-items: flex-end;
  gap: 1px;
  margin-top: 4px;
}
.commerce {
  font-size: 21px;
  letter-spacing: -1.100px;
  line-height: 18px;
}
.subs {
  font-size: 13.500px;
  letter-spacing: -0.900px;
  line-height: 12px;
}
.img-hint {
  margin-top: 21px;
  color: #646970;
  line-height: 18px;
  margin-bottom: 21px;
}
.cat-body {
  padding: 8px 12px 0 12px;
  height: 432px;
  box-sizing: border-box;
}
.cat-tabs {
  display: flex;
  height: 27px;
  position: relative;
  z-index: 1;
}
.cat-tab {
  height: 28px;
  line-height: 26px;
  padding: 0 5px;
  color: #2271b1;
  box-sizing: border-box;
  font-size: 12.500px;
}
.cat-tab + .cat-tab {
  margin-left: 5px;
}
.cat-tab.on {
  border: 1px solid #dcdcde;
  border-bottom: 1px solid #fff;
  color: #50575e;
  background: #fff;
}
.cat-list {
  height: 201px;
  box-sizing: border-box;
  border: 1px solid #dcdcde;
  display: flex;
  overflow: hidden;
  font-size: 12.500px;
  color: #50575e;
}
.cat-list ul {
  flex: 1;
  padding: 14px 0 0 12px;
}
.cat-list li {
  height: 23.800px;
  display: flex;
  align-items: center;
  gap: 7px;
}
.cat-list li.child {
  padding-left: 18px;
}
.scrollbar {
  width: 14px;
  margin: 0 1px 0 0;
  background: #fafafa;
  display: flex;
  flex-direction: column;
  align-items: center;
  padding-top: 9px;
  box-sizing: border-box;
}
.sb-up {
  border: 4px solid transparent;
  border-bottom: 5px solid #9a9a9a;
  border-top: 0;
}
.sb-thumb {
  width: 9px;
  height: 86px;
  margin-top: 6px;
  border-radius: 4px;
  background: #8b8b8b;
}
.sb-down {
  border: 4px solid transparent;
  border-top: 5px solid #666;
  border-bottom: 0;
  margin-top: 79px;
}
.add-cat {
  display: block;
  margin-top: 11px;
  line-height: 18px;
  font-size: 13px;
}
.field.wide {
  margin-top: 14px;
}
.add-cat + .field.wide {
  margin-top: 24px;
}
.cat-body .btn {
  margin-top: 14px;
}
.publish {
  height: 307px;
}
.pub-body {
  padding: 10px 10px 0;
  height: 199px;
  box-sizing: border-box;
}
.pub-preview {
  display: flex;
  justify-content: flex-end;
  margin-bottom: 4px;
}
.pub-preview .btn {
  padding: 0 9px;
}
.pub-row {
  height: 34px;
  display: flex;
  align-items: center;
  gap: 6px;
}
.pub-row svg {
  fill: #8c8f94;
  flex: none;
  margin-left: -1px;
}
.pub-row b, .pub-catalog b {
  font-weight: 600;
}
.pub-catalog {
  margin-top: 8px;
  line-height: 18px;
}
.pub-foot {
  height: 70px;
  box-sizing: border-box;
  border-top: 1px solid #dcdcde;
  background: #f6f7f7;
  display: flex;
  justify-content: space-between;
  padding: 10px 10px 0 10px;
}
.pub-links {
  display: flex;
  flex-direction: column;
  gap: 6px;
  line-height: 18px;
}
.update-wrap {
  position: relative;
  margin-top: 18px;
  height: 32px;
  outline: 4px solid #5b2a8c;
  outline-offset: 1px;
}
.cursor {
  position: absolute;
  left: 28px;
  top: 13px;
}
</style>
